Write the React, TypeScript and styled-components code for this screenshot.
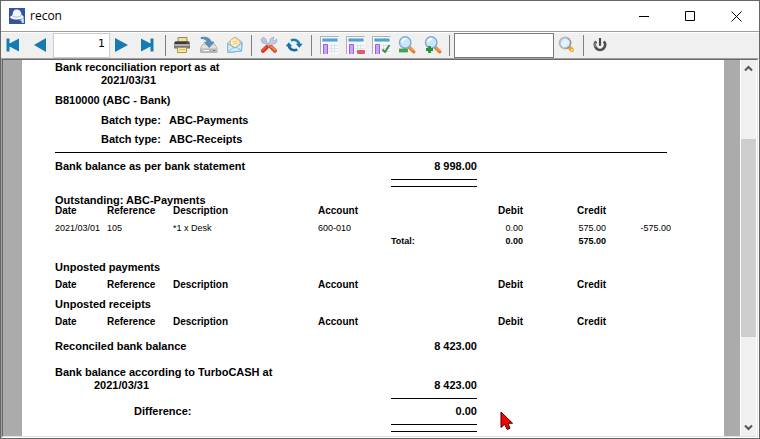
import React from "react";
import styled, { createGlobalStyle } from "styled-components";

const GlobalStyle = createGlobalStyle`
  * { box-sizing: border-box; }
  html, body { margin: 0; padding: 0; }
  body { font-family: "Liberation Sans", Arial, sans-serif; color: #000; background: #fff; }
`;

const Window = styled.div`
  display: flex;
  flex-direction: column;
  height: 100vh;
  border: 1px solid #666;
  background: #fff;
  overflow: hidden;
`;

const TitleBar = styled.header`
  display: flex;
  flex: none;
  align-items: center;
  height: 30px;
  padding-left: 8px;
`;

const Title = styled.h1`
  flex: 1;
  margin: 0 0 0 5px;
  font: 400 12px/16px "Open Sans", "Noto Sans", sans-serif;
`;

const CaptionButton = styled.button`
  display: flex;
  align-items: center;
  justify-content: center;
  width: 46px;
  height: 29px;
  padding: 0;
  border: 0;
  background: none;
`;

const Toolbar = styled.div`
  display: flex;
  flex: none;
  align-items: center;
  height: 27px;
  border-top: 1px solid #a0a0a0;
  background: #f0f0f0;
  box-shadow: inset 0 1px 0 #fff;
`;

const ToolButton = styled.button`
  display: flex;
  flex: none;
  align-items: center;
  justify-content: center;
  width: 26px;
  height: 24px;
  padding: 0;
  border: 0;
  background: none;
`;

const Separator = styled.span`
  flex: none;
  width: 1px;
  height: 21px;
  margin: 0 4px 0 3px;
  background: #808080;
`;

const PageInput = styled.input`
  flex: none;
  width: 57px;
  height: 25px;
  padding: 0 4px 3px 2px;
  border: 1px solid #ccc;
  background: #fff;
  font: 11px/13px "DejaVu Sans", sans-serif;
  text-align: right;
`;

const SearchInput = styled.input`
  flex: none;
  width: 100px;
  height: 25px;
  padding: 0 3px;
  border: 1px solid #7a7a7a;
  background: #fff;
  font: 11px/13px "Liberation Sans", Arial, sans-serif;
`;

const Frame = styled.div`
  display: flex;
  flex: 1;
  min-height: 0;
  border: 1px solid;
  border-color: #a0a0a0 #fff #fff #a0a0a0;
`;

const Viewport = styled.div`
  display: flex;
  flex: 1;
  min-width: 0;
  border: 1px solid;
  border-color: #696969 #e3e3e3 #e3e3e3 #696969;
  background: #ababab;
`;

const Page = styled.main`
  position: relative;
  flex: 1;
  min-width: 0;
  margin: 0 16px 0 19px;
  padding: 1px 53px 0 33px;
  overflow: hidden;
  background: #fff;
  font-size: 11px;
  line-height: 13px;
  font-weight: 700;
`;

const Line = styled.div<{ $indent?: number; $gap?: number }>`
  margin-top: ${(p) => p.$gap ?? 0}px;
  padding-left: ${(p) => p.$indent ?? 0}px;
  white-space: nowrap;
`;

const Field = styled(Line)`
  display: grid;
  grid-template-columns: 68px 1fr;
`;

const Summary = styled(Line)`
  display: grid;
  grid-template-columns: 1fr 86px;
  width: 422px;
`;

const Amount = styled.span`
  text-align: right;
`;

const FullRule = styled.hr`
  height: 1px;
  margin: 6px 4px 0 0;
  border: 0;
  background: #000;
`;

const SumRule = styled.div<{ $double?: boolean }>`
  width: 86px;
  height: ${(p) => (p.$double ? 8 : 1)}px;
  margin: 6px 0 0 336px;
  border-top: 1px solid #000;
  border-bottom: ${(p) => (p.$double ? "1px solid #000" : "0")};
`;

const SectionTitle = styled.h2<{ $gap: number; $tight?: boolean }>`
  margin: ${(p) => p.$gap}px 0 ${(p) => (p.$tight ? -2 : 5)}px;
  font-size: 11px;
  line-height: 13px;
`;

const Entries = styled.table`
  width: 100%;
  table-layout: fixed;
  border-collapse: collapse;
  white-space: nowrap;
  th, td { padding: 0; line-height: 12px; text-align: left; }
  th { font-size: 10px; font-weight: 700; }
  td { font-size: 9px; font-weight: 400; }
`;

const BodyRow = styled.tr`
  td { height: 17px; vertical-align: bottom; }
`;

const TotalRow = styled.tr`
  td, th { height: 13px; vertical-align: bottom; font-weight: 700; font-size: 9px; }
`;

const Num = styled.td`
  && { text-align: right; }
`;

const NumHead = styled.th`
  && { text-align: right; }
`;

const Scrollbar = styled.div`
  display: flex;
  flex: none;
  flex-direction: column;
  width: 17px;
  border-left: 1px solid #fff;
  border-right: 1px solid #fff;
  background: #f0f0f0;
`;

const ScrollArrow = styled.button`
  display: flex;
  flex: none;
  align-items: center;
  justify-content: center;
  height: 17px;
  padding: 0;
  border: 0;
  background: none;
`;

const Track = styled.div`
  display: grid;
  flex: 1;
  grid-template-rows: 62fr 198fr 82fr;
`;

const Thumb = styled.div`
  grid-row: 2;
  background: #cdcdcd;
`;

const Pointer = styled.svg`
  position: absolute;
  left: 478px;
  top: 351px;
`;

const Icon = ({ children }: { children: React.ReactNode }) => (
  <svg width="18" height="18" viewBox="0 0 18 18" aria-hidden="true">{children}</svg>
);

const HatIcon = () => (
  <svg width="16" height="16" viewBox="0 0 16 16" aria-hidden="true">
    <rect width="16" height="16" fill="#3553a1" />
    <path d="M1 9.5C1 8.4 2.3 8 3.4 7.6C3.5 4.2 4.6 1.8 7 1.5C10 .9 12.4 3.1 12.6 7.1C14.3 7.8 15 8.8 14.6 9.7C13 11.7 3.6 12.6 1 9.5Z" fill="#f4f7fb" />
    <path d="M3.6 8.1C6 9.6 10 9.3 12.4 7.5" fill="none" stroke="#aebee0" strokeWidth="1" />
    <path d="M10.5 12.2L14.8 10V15L12.6 14.7V12.8Z" fill="#dce6f4" />
  </svg>
);

const PrinterIcon = () => (
  <Icon>
    <path d="M4 1.5H13V6H4Z" fill="#f2dda0" stroke="#9f8952" />
    <path d="M0 7Q0 5.5 1.5 5.5H14.5Q16 5.5 16 7V12.5H0Z" fill="#747982" />
    <path d="M1 5.5H15V8H1Z" fill="#353940" />
    <path d="M.5 9H15.5" stroke="#c1c4ca" strokeWidth="1.5" />
    <path d="M12.5 7H14.5" stroke="#df4a3b" />
    <path d="M3.5 11.5H12.5V16.5H3.5Z" fill="#f9e894" stroke="#aa9551" />
    <path d="M5 13.5H11" stroke="#d5bd67" />
  </Icon>
);

const SaveIcon = () => (
  <Icon>
    <path d="M3 8H14.5L17 12V16.5H.5V12Z" fill="#dfe0e2" stroke="#b1b4b8" />
    <path d="M.8 12.5H16.8V16.3H.8Z" fill="#b4b7bb" />
    <path d="M3 14.5H9" stroke="#f7f7f7" />
    <path d="M13 14.5H15" stroke="#71757b" />
    <path d="M1 1.5C6 .5 10.5 2 11.2 6H14L9.2 11.5L4.5 6.3H7.2C6.5 3.7 4.3 2.5 1 2.5Z" fill="#5b8fbe" stroke="#45779f" strokeWidth=".7" />
  </Icon>
);

const MailIcon = () => (
  <Icon>
    <path d="M1.5 7L9 1L16 6L15.5 15L2 16.5Z" fill="#c3e3f7" stroke="#8dbbdc" />
    <path d="M4 4.5L8.8 1.5L14 5L14 8.5L9 12L4.7 9Z" fill="#fff0c5" stroke="#f0b050" />
    <path d="M6.5 6L11.5 5.2M7 8L11.5 7.3" stroke="#f2c67a" />
    <path d="M1.5 7.5L8.8 12L16 6.8L15.5 15L2 16.5Z" fill="#d2ecfa" stroke="#79b0da" />
    <path d="M2.2 16.2L7.3 11.3M10.5 11L15.4 14.8" fill="none" stroke="#82b7df" />
  </Icon>
);

const ToolsIcon = () => (
  <Icon>
    <path d="M6.5 8.8L9.2 11.5L12.7 8.5L16.5 6.5L17 3L14.5 4.8L13 3.5L14 1L10.5 2.5L10 5.5Z" fill="#c3cbea" stroke="#97a2cf" strokeWidth=".7" />
    <path d="M.8 3.5L3.5 1.2L6.2 3.5L6.5 6L10.3 9.6L8.8 11L5 7.3L2.6 7Z" fill="#bdc5dc" stroke="#939fbe" strokeWidth=".7" />
    <path d="M3 14.7L6.7 11.2" stroke="#d83523" strokeWidth="4.2" strokeLinecap="round" />
    <path d="M10.8 10.8L15 14.8" stroke="#dd4b2b" strokeWidth="4" strokeLinecap="round" />
    <path d="M11 10.3L15.2 14" stroke="#f4943d" strokeWidth="1.6" strokeLinecap="round" />
    <path d="M2.4 14.2L6 10.8" stroke="#f16b4d" strokeWidth="1.1" strokeLinecap="round" />
  </Icon>
);

const RefreshIcon = () => (
  <Icon>
    <path d="M5 4.6A5.5 5.5 0 0 1 13.3 8.5" fill="none" stroke="#1b82b9" strokeWidth="2.6" />
    <path d="M9.8 7.8H16.8L13.3 11.8Z" fill="#1575aa" />
    <path d="M11.2 13.3A5.5 5.5 0 0 1 2.8 9.5" fill="none" stroke="#126b9e" strokeWidth="2.6" />
    <path d="M-.4 10.2H6.3L2.8 6.2Z" fill="#1575aa" />
  </Icon>
);

const SheetIcon = ({ mark }: { mark?: "minus" | "check" }) => (
  <svg width="19" height="18" viewBox="0 0 19 18" aria-hidden="true">
    <path d="M.5 18V.5H18.5" fill="#f9fafc" stroke="#a9aeb7" />
    <path d="M1 1H18.5V18H1Z" fill="#f8f9fb" />
    <path d="M2.5 4H17.5" stroke="#3a94c6" strokeWidth="3" />
    <path d="M3.5 4H16.5" stroke="#68b4db" />
    <path d="M3 8H7.5V18H3Z" fill="#c9a2ff" />
    <path d="M3.5 18V8.5H7.5V18" fill="none" stroke="#975fec" />
    <path d="M9 9.5H18M9 12.5H18M9 15.5H18M11.5 8V17M14.5 8V17" stroke="#dbe0ea" />
    {mark === "minus" && <rect x="11" y="14" width="8" height="4" rx="1" fill="#d95c66" />}
    {mark === "check" && <path d="M10.5 13.5L13 16L17.5 9" fill="none" stroke="#39924c" strokeWidth="2" />}
  </svg>
);

const ZoomIcon = ({ plus }: { plus?: boolean }) => (
  <Icon>
    <path d="M11 11L15.8 15.8" stroke="#e97824" strokeWidth="3.2" strokeLinecap="round" />
    <path d="M11.5 11L15.5 15" stroke="#ffc064" strokeWidth="1" />
    <circle cx="7.2" cy="6.5" r="5.7" fill="#c7e6fc" stroke="#7eaad0" strokeWidth="1.4" />
    <path d="M4 6.2Q4.5 3 8 2.8" stroke="#fff" strokeWidth="2" fill="none" />
    {plus ? (
      <path d="M5.5 10V17M2 13.5H9" stroke="#26923a" strokeWidth="2.8" />
    ) : (
      <rect x="1.5" y="13" width="8" height="3" fill="#49a853" stroke="#26863b" strokeWidth=".6" />
    )}
  </Icon>
);

const FindIcon = () => (
  <Icon>
    <path d="M12 12L14 14" stroke="#f1a51e" strokeWidth="4" strokeLinecap="round" />
    <circle cx="14" cy="14" r="1.2" fill="#ffd55b" />
    <circle cx="7" cy="7" r="5.4" fill="#d1efff" stroke="#b7bac0" strokeWidth="2" />
    <path d="M3.5 9L9 3.5M5 11L11 5" stroke="#eefaff" strokeWidth="1.3" />
    <path d="M9.5 1.8A5.8 5.8 0 0 1 7.8 12.8" stroke="#8b8f95" strokeWidth="1" fill="none" />
  </Icon>
);

const PowerIcon = () => (
  <Icon>
    <path d="M4.2 5.4A5.1 5.1 0 1 0 11.8 5.4" fill="none" stroke="#505050" strokeWidth="2.8" />
    <path d="M3.4 6.6A5.4 5.4 0 0 0 3.2 11" fill="none" stroke="#a3a3a3" strokeWidth="1" />
    <path d="M8 2V9.8" stroke="#4b4b4b" strokeWidth="2.2" />
  </Icon>
);

const arrowFill = "#147cb3";

const EntryTable = ({ showEntries }: { showEntries?: boolean }) => (
  <Entries>
    <colgroup>
      {[52, 66, 145, 73, 86, 46, 83].map((w, i) => <col key={i} width={w} />)}
      <col />
    </colgroup>
    <thead>
      <tr>
        <th>Date</th>
        <th>Reference</th>
        <th>Description</th>
        <th>Account</th>
        <td />
        <NumHead>Debit</NumHead>
        <NumHead>Credit</NumHead>
        <td />
      </tr>
    </thead>
    {showEntries && (
      <tbody>
        <BodyRow>
          <td>2021/03/01</td>
          <td>105</td>
          <td>*1 x Desk</td>
          <td>600-010</td>
          <td />
          <Num>0.00</Num>
          <Num>575.00</Num>
          <Num>-575.00</Num>
        </BodyRow>
        <TotalRow>
          <td colSpan={4} />
          <th>Total:</th>
          <Num>0.00</Num>
          <Num>575.00</Num>
          <td />
        </TotalRow>
      </tbody>
    )}
  </Entries>
);

export default function App() {
  return (
    <Window>
      <GlobalStyle />
      <TitleBar>
        <HatIcon />
        <Title>recon</Title>
        <CaptionButton aria-label="Minimize">
          <svg width="11" height="11"><path d="M0 5.5H10" stroke="#000" /></svg>
        </CaptionButton>
        <CaptionButton aria-label="Maximize">
          <svg width="11" height="11"><path d="M.5 .5H9.5V9.5H.5Z" fill="none" stroke="#000" /></svg>
        </CaptionButton>
        <CaptionButton aria-label="Close">
          <svg width="11" height="11"><path d="M.5 .5L10.5 10.5M10.5 .5L.5 10.5" stroke="#000" /></svg>
        </CaptionButton>
      </TitleBar>

      <Toolbar role="toolbar" aria-label="Report preview">
        <ToolButton aria-label="First page">
          <Icon><path d="M1.5 2.5H4.5V7.5L14 2.5V15.5L4.5 10.5V15.5H1.5Z" fill={arrowFill} /></Icon>
        </ToolButton>
        <ToolButton aria-label="Previous page">
          <Icon><path d="M15 2V16L3 9Z" fill={arrowFill} /></Icon>
        </ToolButton>
        <PageInput aria-label="Page number" defaultValue="1" />
        <ToolButton aria-label="Next page">
          <Icon><path d="M1 2V16L14 9Z" fill={arrowFill} /></Icon>
        </ToolButton>
        <ToolButton aria-label="Last page">
          <Icon><path d="M1 2.5L10.5 7.5V2.5H13.5V15.5H10.5V10.5L1 15.5Z" fill={arrowFill} /></Icon>
        </ToolButton>
        <Separator />
        <ToolButton aria-label="Print"><PrinterIcon /></ToolButton>
        <ToolButton aria-label="Save"><SaveIcon /></ToolButton>
        <ToolButton aria-label="Send by mail"><MailIcon /></ToolButton>
        <Separator />
        <ToolButton aria-label="Settings"><ToolsIcon /></ToolButton>
        <ToolButton aria-label="Refresh"><RefreshIcon /></ToolButton>
        <Separator />
        <ToolButton aria-label="Show layout"><SheetIcon /></ToolButton>
        <ToolButton aria-label="Remove layout"><SheetIcon mark="minus" /></ToolButton>
        <ToolButton aria-label="Apply layout"><SheetIcon mark="check" /></ToolButton>
        <ToolButton aria-label="Zoom out"><ZoomIcon /></ToolButton>
        <ToolButton aria-label="Zoom in"><ZoomIcon plus /></ToolButton>
        <Separator />
        <SearchInput aria-label="Search text" />
        <ToolButton aria-label="Find"><FindIcon /></ToolButton>
        <Separator />
        <ToolButton aria-label="Close preview"><PowerIcon /></ToolButton>
      </Toolbar>

      <Frame>
        <Viewport>
          <Page>
            <Line>Bank reconciliation report as at</Line>
            <Line $indent={46}>2021/03/31</Line>
            <Line $gap={7}>B810000 (ABC - Bank)</Line>
            <Field $indent={46} $gap={7}><span>Batch type:</span><span>ABC-Payments</span></Field>
            <Field $indent={46} $gap={6}><span>Batch type:</span><span>ABC-Receipts</span></Field>
            <FullRule />
            <Summary $gap={7}><span>Bank balance as per bank statement</span><Amount>8 998.00</Amount></Summary>
            <SumRule $double />

            <SectionTitle $gap={7} $tight>Outstanding: ABC-Payments</SectionTitle>
            <EntryTable showEntries />
            <SectionTitle $gap={14}>Unposted payments</SectionTitle>
            <EntryTable />
            <SectionTitle $gap={7}>Unposted receipts</SectionTitle>
            <EntryTable />

            <Summary $gap={12}><span>Reconciled bank balance</span><Amount>8 423.00</Amount></Summary>
            <Line $gap={13}>Bank balance according to TurboCASH at</Line>
            <Summary $indent={39}><span>2021/03/31</span><Amount>8 423.00</Amount></Summary>
            <SumRule />
            <Summary $indent={79} $gap={6}><span>Difference:</span><Amount>0.00</Amount></Summary>
            <SumRule $double />

            <Pointer width="14" height="20" viewBox="0 0 14 20" aria-hidden="true">
              <path d="M1 1V16.5L4.5 13.3L7.3 18.5L10 17.2L7.8 12.2H12.5Z" fill="#f00" stroke="#300" strokeWidth="1" />
            </Pointer>
          </Page>
          <Scrollbar>
            <ScrollArrow aria-label="Scroll up">
              <svg width="9" height="7"><path d="M1 5.5L4.5 2L8 5.5" fill="none" stroke="#555" strokeWidth="2" /></svg>
            </ScrollArrow>
            <Track><Thumb /></Track>
            <ScrollArrow aria-label="Scroll down">
              <svg width="9" height="7"><path d="M1 1.5L4.5 5L8 1.5" fill="none" stroke="#555" strokeWidth="2" /></svg>
            </ScrollArrow>
          </Scrollbar>
        </Viewport>
      </Frame>
    </Window>
  );
}
